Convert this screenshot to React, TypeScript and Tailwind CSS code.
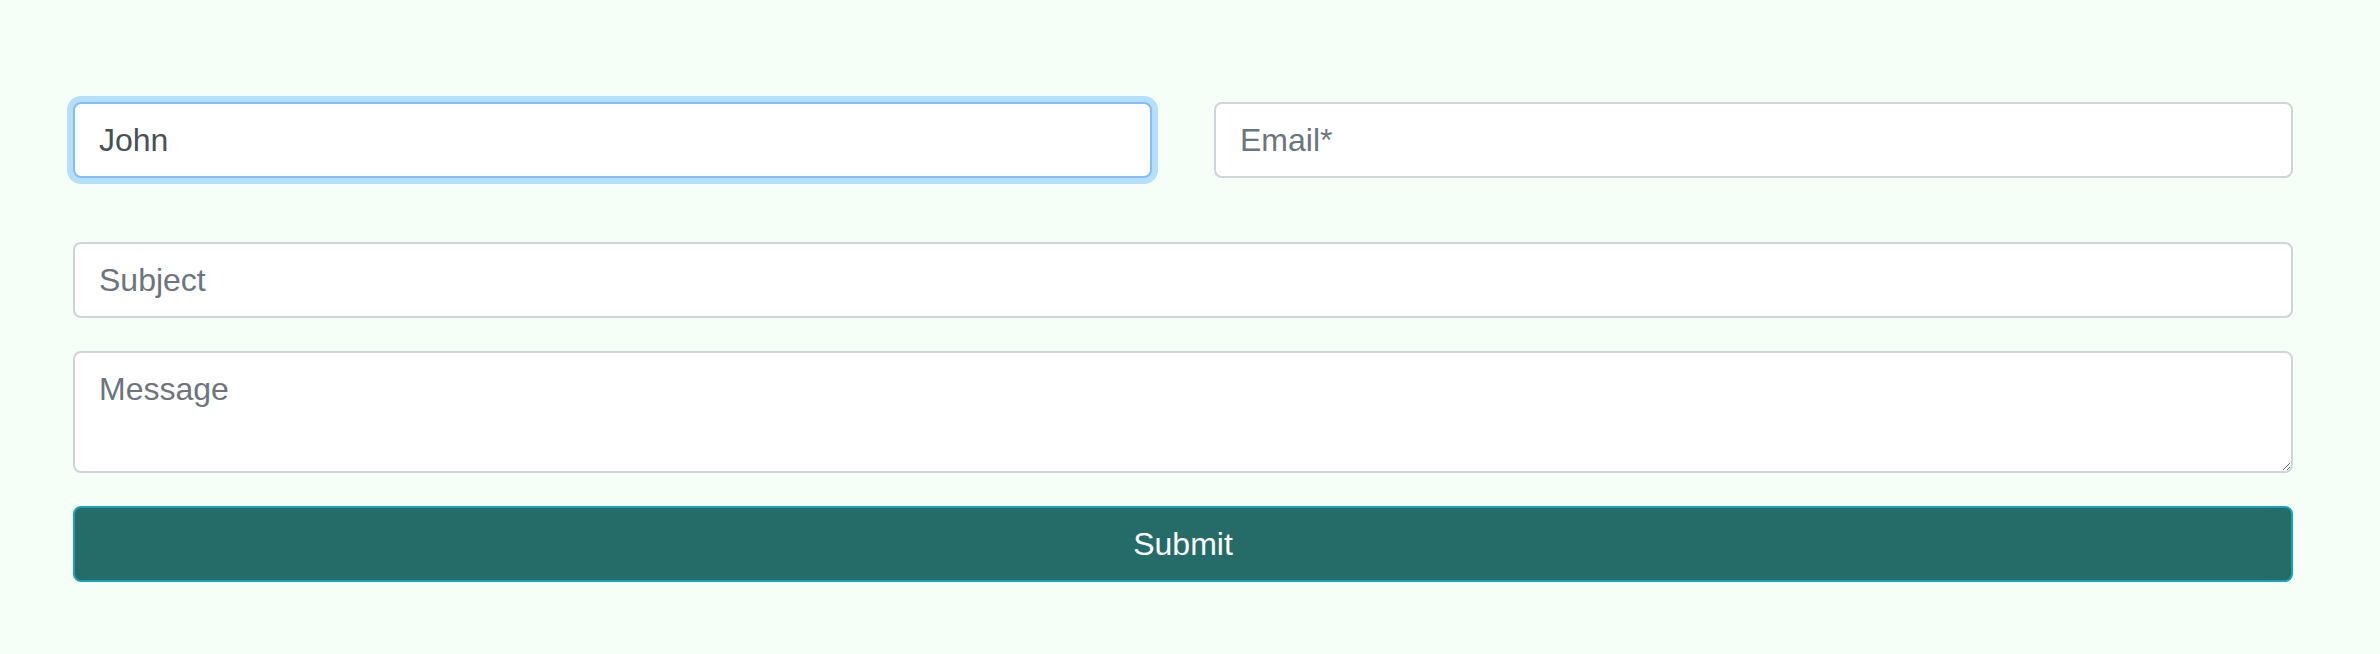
import React from 'react';

const field =
  'w-full h-[76px] rounded-[8px] border-2 border-[#ced4da] bg-white px-[24px] text-[32px] text-[#495057] placeholder:text-[#6c757d] outline-none';

const ContactForm: React.FC = () => {
  return (
    <form
      className="flex flex-col pl-[73px] pt-[102px] w-[2293px]"
      style={{ fontFamily: '"Liberation Sans", Arial, sans-serif' }}
      onSubmit={(e) => e.preventDefault()}
    >
      <div className="flex gap-[62px]">
        <input
          className={field + ' !border-[#80bdff] shadow-[0_0_0_6px_rgba(0,123,255,0.25)]'}
          defaultValue="John"
          type="text"
        />
        <input className={field} placeholder="Email*" type="email" />
      </div>
      <input className={field + ' mt-[64px]'} placeholder="Subject" type="text" />
      <textarea
        className={field + ' mt-[33px] !h-[122px] py-[12px] leading-[48px] resize-y'}
        placeholder="Message"
      />
      <button
        type="submit"
        className="mt-[33px] h-[76px] w-full rounded-[8px] border-2 border-[#17a2b8] bg-[#256b68] text-[32px] text-white"
      >
        Submit
      </button>
    </form>
  );
};

export default function App() {
  return (
    <div className="w-full h-[654px] bg-[#f5fff8] overflow-hidden">
      <ContactForm />
    </div>
  );
}
